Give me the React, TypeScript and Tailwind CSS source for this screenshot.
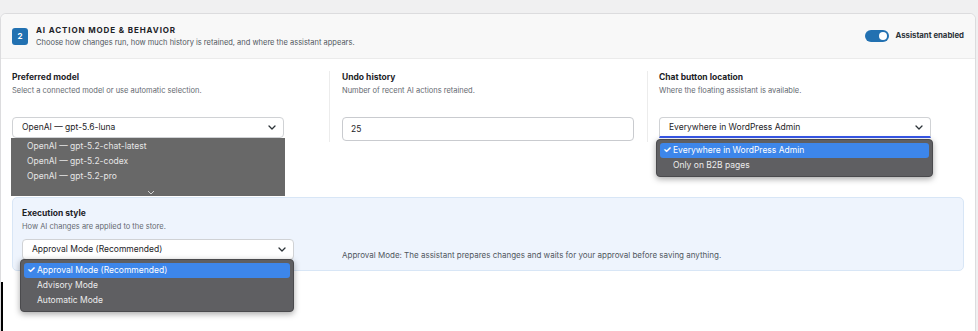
import React from "react";

const Chevron = ({ className = "" }: { className?: string }) => (
  <svg width="8" height="5" viewBox="0 0 8 5" className={className}>
    <polyline
      points="1,1 4,4 7,1"
      fill="none"
      stroke="#2c3338"
      strokeWidth="1.3"
      strokeLinecap="round"
      strokeLinejoin="round"
    />
  </svg>
);

const FieldHead = ({ label, hint }: { label: string; hint: string }) => (
  <>
    <div className="text-[8.5px] leading-[11px] font-bold text-[#1d2327]">{label}</div>
    <div className="mt-[2px] text-[7.5px] leading-[11px] text-[#646970]">{hint}</div>
  </>
);

const SelectBox = ({ value, focused = false }: { value: string; focused?: boolean }) => (
  <div
    className={
      focused
        ? "flex h-[21px] w-[272px] items-center justify-between rounded-t-[4px] border border-[#d0d2d5] border-b-[#3858e9] border-b-2 bg-white pl-[9px] pr-[7px] text-[8.5px] text-[#1d2327]"
        : "flex h-[21px] w-[272px] items-center justify-between rounded-[4px] border border-[#d0d2d5] bg-white pl-[9px] pr-[7px] text-[8.5px] text-[#1d2327]"
    }
  >
    <span>{value}</span>
    <Chevron />
  </div>
);

const PopupList = ({
  items,
  selected,
  className,
}: {
  items: string[];
  selected: number;
  className: string;
}) => (
  <div
    className={
      "absolute z-10 rounded-[4px] border border-[#4a4a4d] bg-[#5f5f62] p-[3px] shadow-[0_2px_6px_rgba(0,0,0,0.35)] " +
      className
    }
  >
    {items.map((item, i) => (
      <div
        key={item}
        className={
          i === selected
            ? "flex h-[15px] items-center rounded-[3px] bg-[#3d86ea] pl-[3px] text-[8.5px] text-white"
            : "flex h-[15px] items-center pl-[13px] text-[8.5px] text-[#ececec]"
        }
      >
        {i === selected && <span className="mr-[1px] w-[9px] text-[9.5px] font-bold">✓</span>}
        {item}
      </div>
    ))}
  </div>
);

export default function App() {
  return (
    <div className="relative h-[331px] w-[978px] overflow-hidden bg-[#f0f0f1] pt-[13px] font-['Inter',sans-serif]">
      <div className="h-[330px] w-[976px] rounded-t-[6px] border border-[#dcdcde] bg-white">
        {/* header */}
        <div className="flex h-[45px] items-center justify-between rounded-t-[6px] border-b border-[#ebebeb] bg-[#f8f8f8] pl-[11px] pr-[11px]">
          <div className="flex items-center gap-[8px]">
            <div className="flex h-[17px] w-[16px] items-center justify-center rounded-[3px] bg-[#2271b1] text-[8px] font-bold text-white">
              2
            </div>
            <div>
              <div className="text-[8px] leading-[11px] font-bold tracking-[0.11em] text-[#1d2327] uppercase">
                AI Action Mode &amp; Behavior
              </div>
              <div className="mt-[2px] text-[7.5px] leading-[10px] text-[#50575e]">
                Choose how changes run, how much history is retained, and where the assistant appears.
              </div>
            </div>
          </div>
          <div className="flex items-center gap-[6px]">
            <div className="flex h-[12px] w-[24px] items-center justify-end rounded-full bg-[#2271b1] pr-[2px]">
              <div className="h-[8px] w-[8px] rounded-full bg-white" />
            </div>
            <span className="text-[7.8px] font-bold text-[#2c3338]">Assistant enabled</span>
          </div>
        </div>

        {/* fields */}
        <div className="grid grid-cols-[328px_318px_1fr] pt-[12px]">
          <div className="pl-[11px] pr-[13px] pt-[1px] pb-[4px]">
            <FieldHead label="Preferred model" hint="Select a connected model or use automatic selection." />
            <div className="relative mt-[21px]">
              <SelectBox value="OpenAI — gpt-5.6-luna" />
              <div className="absolute top-full left-[-1px] z-10 h-[58px] w-[274px] bg-[#686868] pt-[1px] text-[8.5px] text-[#e6e6e6]">
                <div className="flex h-[15px] items-center pl-[16px]">OpenAI — gpt-5.2-chat-latest</div>
                <div className="flex h-[15px] items-center pl-[16px]">OpenAI — gpt-5.2-codex</div>
                <div className="flex h-[15px] items-center pl-[16px]">OpenAI — gpt-5.2-pro</div>
                <div className="flex justify-center pt-[6px] pl-[6px]">
                  <svg width="8" height="5" viewBox="0 0 8 5">
                    <polyline points="1,1 4,4 7,1" fill="none" stroke="#d0d0d0" strokeWidth="1" />
                  </svg>
                </div>
              </div>
            </div>
          </div>
          <div className="border-l border-[#ececec] pl-[12px] pr-[13px] pt-[1px] pb-[1px]">
            <FieldHead label="Undo history" hint="Number of recent AI actions retained." />
            <div className="mt-[21px] flex h-[24px] items-center rounded-[4px] border border-[#c9cbcf] bg-white pl-[8px] text-[8.5px] text-[#1d2327]">
              25
            </div>
          </div>
          <div className="border-l border-[#ececec] pl-[11px] pr-[12px] pt-[1px] pb-[4px]">
            <FieldHead label="Chat button location" hint="Where the floating assistant is available." />
            <div className="relative mt-[21px]">
              <SelectBox value="Everywhere in WordPress Admin" focused />
              <PopupList
                items={["Everywhere in WordPress Admin", "Only on B2B pages"]}
                selected={0}
                className="top-[22px] left-[-3px] w-[277px]"
              />
            </div>
          </div>
        </div>

        {/* execution style */}
        <div className="px-[11px] pt-[55px]">
          <div className="flex h-[74px] items-end rounded-[5px] border border-[#d8e6f6] bg-[#eef4fd] pl-[9px] pt-[10px] pb-[9px]">
            <div className="w-[320px] self-stretch">
              <FieldHead label="Execution style" hint="How AI changes are applied to the store." />
              <div className="relative mt-[7px]">
                <SelectBox value="Approval Mode (Recommended)" />
                <PopupList
                  items={["Approval Mode (Recommended)", "Advisory Mode", "Automatic Mode"]}
                  selected={0}
                  className="top-[20px] left-[-2px] w-[274px]"
                />
              </div>
            </div>
            <div className="text-[8px] leading-[11px] text-[#50575e]">
              Approval Mode: The assistant prepares changes and waits for your approval before saving anything.
            </div>
          </div>
        </div>
      </div>
      <div className="absolute top-[282px] left-[1px] h-[49px] w-[2px] bg-black" />
    </div>
  );
}
